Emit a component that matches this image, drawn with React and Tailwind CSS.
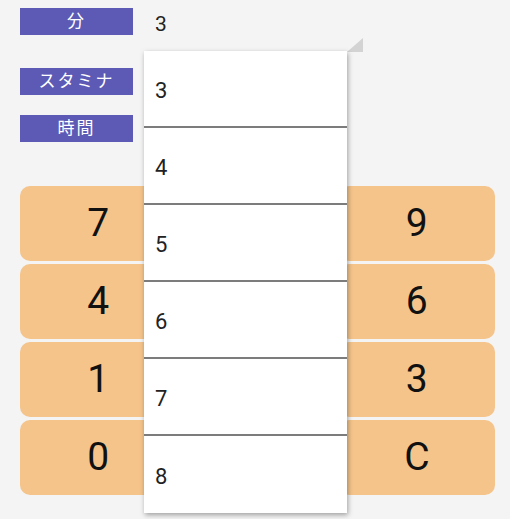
const labels = [
  { text: '分', className: 'mt-2' },
  { text: 'スタミナ', className: 'mt-[33px]' },
  { text: '時間', className: 'mt-5' },
]

const keys = ['7', '8', '9', '4', '5', '6', '1', '2', '3', '0', '00', 'C']

const options = ['3', '4', '5', '6', '7', '8']

const font = { fontFamily: 'Roboto, "Noto Sans CJK JP", sans-serif' }

export default function App() {
  return (
    <div className="relative h-[519px] w-[510px] overflow-hidden bg-[#f4f4f4]" style={font}>
      <div className="relative pl-5 pr-[15px]">
        {labels.map((label) => (
          <div
            key={label.text}
            className={`${label.className} flex h-[27px] w-[113px] items-center justify-center bg-[#5c5ab5] text-[17px] leading-none tracking-[2px] text-white`}
          >
            {label.text}
          </div>
        ))}

        {/* spinner value */}
        <div className="absolute left-[144px] top-0 h-[44px] w-[219px]">
          <span className="absolute left-[11px] top-[4px] text-[21px] leading-6 text-[#222]">3</span>
          <svg className="absolute bottom-0 right-0" width="16" height="14" viewBox="0 0 16 14">
            <polygon points="0,14 16,0 16,14" fill="#d3d3d3" />
          </svg>
        </div>

        <div className="mt-[44px] grid grid-cols-3 gap-[3px]">
          {keys.map((key) => (
            <button
              key={key}
              className="flex h-[75px] items-center justify-center rounded-[10px] bg-[#f4c48b] text-[39px] leading-none text-[#111]"
            >
              {key}
            </button>
          ))}
        </div>
      </div>

      {/* open dropdown */}
      <ul className="absolute left-[144px] top-[51px] w-[203px] bg-white shadow-[1px_2px_5px_rgba(0,0,0,0.35)]">
        {options.map((option, index) => (
          <li
            key={option}
            className={`flex h-[77px] items-center pl-[11px] pt-[3px] text-[22px] text-[#222] ${
              index < options.length - 1 ? 'border-b-2 border-[#7c7c7c]' : ''
            }`}
          >
            {option}
          </li>
        ))}
      </ul>
    </div>
  )
}
